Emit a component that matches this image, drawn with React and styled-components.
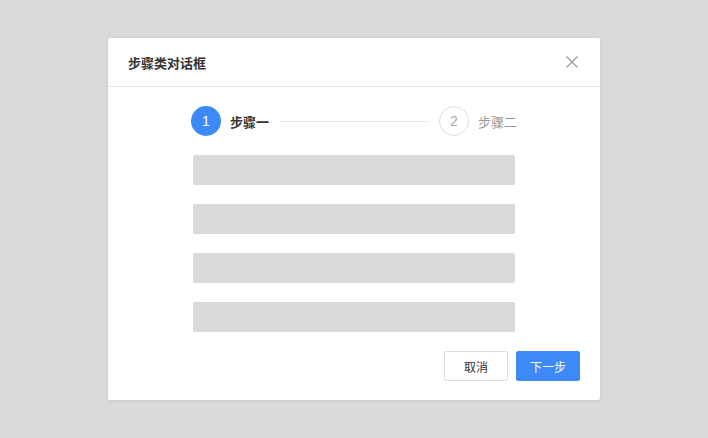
import React from "react";
import styled, { createGlobalStyle } from "styled-components";

const GlobalStyle = createGlobalStyle`
  html, body {
    margin: 0;
    padding: 0;
    background: #dadada;
    font-family: "Noto Sans CJK SC", "Liberation Sans", sans-serif;
  }
`;

const Page = styled.div`
  width: 708px;
  height: 438px;
  display: flex;
  justify-content: center;
  padding-top: 38px;
  box-sizing: border-box;
`;

const Dialog = styled.div`
  width: 492px;
  height: 362px;
  background: #fff;
  border-radius: 2px;
  box-shadow: 0 1px 4px rgba(0, 0, 0, 0.08);
  display: flex;
  flex-direction: column;
`;

const Header = styled.div`
  height: 49px;
  box-sizing: border-box;
  border-bottom: 1px solid #e8e8e8;
  display: flex;
  align-items: center;
  justify-content: space-between;
  padding: 0 20px 0 20px;
`;

const Title = styled.div`
  font-size: 13px;
  font-weight: 600;
  color: #333;
`;

const Close = styled.button`
  border: none;
  background: none;
  padding: 0;
  width: 16px;
  height: 16px;
  display: flex;
  align-items: center;
  justify-content: center;
  cursor: pointer;
`;

const Body = styled.div`
  flex: 1;
  display: flex;
  flex-direction: column;
  align-items: center;
  padding-top: 19px;
`;

const Steps = styled.div`
  width: 326px;
  display: flex;
  align-items: center;
  margin-bottom: 19px;
`;

const Circle = styled.div`
  width: 30px;
  height: 30px;
  box-sizing: border-box;
  border-radius: 50%;
  display: flex;
  align-items: center;
  justify-content: center;
  font-size: 14px;
  font-family: "Liberation Sans", sans-serif;
  background: ${(p) => (p.$active ? "#3d8af7" : "#fff")};
  color: ${(p) => (p.$active ? "#fff" : "#aaa")};
  border: ${(p) => (p.$active ? "none" : "1px solid #ddd")};
`;

const StepLabel = styled.span`
  margin-left: 9px;
  font-size: 13px;
  font-weight: ${(p) => (p.$active ? 600 : 400)};
  color: ${(p) => (p.$active ? "#333" : "#999")};
`;

const Line = styled.div`
  flex: 1;
  height: 1px;
  background: #e4e4e4;
  margin: 0 11px;
`;

const Fields = styled.div`
  width: 322px;
  display: flex;
  flex-direction: column;
  gap: 19px;
`;

const Field = styled.div`
  height: 30px;
  background: #d9d9d9;
  border-radius: 2px;
`;

const Footer = styled.div`
  align-self: stretch;
  display: flex;
  justify-content: flex-end;
  gap: 8px;
  padding: 19px 20px 19px 0;
`;

const Button = styled.button`
  width: 64px;
  height: 30px;
  box-sizing: border-box;
  border-radius: 2px;
  font-size: 12px;
  font-family: "Noto Sans CJK SC", "Liberation Sans", sans-serif;
  cursor: pointer;
  background: ${(p) => (p.$primary ? "#3d8af7" : "#fff")};
  color: ${(p) => (p.$primary ? "#fff" : "#333")};
  border: 1px solid ${(p) => (p.$primary ? "#3d8af7" : "#dcdcdc")};
`;

const App = () => {
  return (
    <>
      <GlobalStyle />
      <Page>
        <Dialog>
          <Header>
            <Title>步骤类对话框</Title>
            <Close aria-label="close">
              <svg width="12" height="12" viewBox="0 0 12 12">
                <path d="M0.5 0.5L11.5 11.5M11.5 0.5L0.5 11.5" stroke="#999" strokeWidth="1.3" />
              </svg>
            </Close>
          </Header>
          <Body>
            <Steps>
              <Circle $active>1</Circle>
              <StepLabel $active>步骤一</StepLabel>
              <Line />
              <Circle>2</Circle>
              <StepLabel>步骤二</StepLabel>
            </Steps>
            <Fields>
              <Field />
              <Field />
              <Field />
              <Field />
            </Fields>
            <Footer>
              <Button>取消</Button>
              <Button $primary>下一步</Button>
            </Footer>
          </Body>
        </Dialog>
      </Page>
    </>
  );
};

export default App;
